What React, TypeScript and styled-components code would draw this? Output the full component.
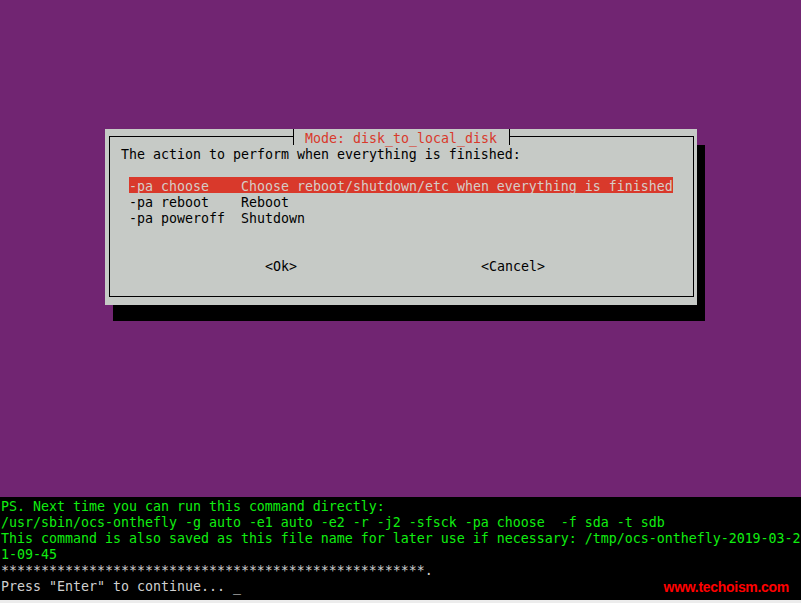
import { createGlobalStyle, styled } from "styled-components";

const GlobalStyle = createGlobalStyle`
    html, body {
        margin: 0;
        padding: 0;
        background: #000;
    }
    body {
        width: 801px;
        height: 603px;
        overflow: hidden;
    }
`;

// terminal grid: 8px columns, 16px rows; line-height a bit taller than the row
// so glyphs sit low in the cell like the console font does
const Screen = styled.div`
    width: 801px;
    height: 603px;
    display: flex;
    flex-direction: column;
    font-family: "DejaVu Sans Mono", monospace;
    font-size: 13.29px;
    line-height: 19px;
    white-space: pre;
`;

const Desktop = styled.div`
    height: 497px;
    box-sizing: border-box;
    padding: 129px 0 0 105px;
    background: #712572;
`;

const Dialog = styled.div`
    position: relative;
    width: 592px;
    height: 176px;
    box-sizing: border-box;
    padding: 7px 3px 8px 4px;
    display: flex;
    background: #c6cac6;
    box-shadow: 8px 16px 0 #000;
`;

const Frame = styled.div`
    flex: 1;
    border: 1px solid #000;
    padding: 8px 0 0 11px;
    display: flex;
    flex-direction: column;
    color: #000;
`;

const Title = styled.div`
    position: absolute;
    top: 0;
    left: 184px;
    height: 16px;
    display: flex;
    background: #c6cac6;
    color: #d9392b;
`;

const Tee = styled.span<{ $side: "left" | "right" }>`
    position: relative;
    width: 8px;
    height: 16px;
    &::before {
        content: "";
        position: absolute;
        left: 4px;
        top: 0;
        width: 1px;
        height: 16px;
        background: #000;
    }
    &::after {
        content: "";
        position: absolute;
        top: 7px;
        left: ${(p) => (p.$side === "left" ? "0" : "4px")};
        width: ${(p) => (p.$side === "left" ? "4px" : "5px")};
        height: 1px;
        background: #000;
    }
`;

const Prompt = styled.div`
    height: 16px;
`;

const Menu = styled.ul`
    list-style: none;
    margin: 16px 0 0 8px;
    padding: 0;
`;

const MenuItem = styled.li<{ $selected?: boolean }>`
    width: 544px;
    height: 16px;
    display: flex;
    background: ${(p) => (p.$selected ? "#d9392b" : "transparent")};
    color: ${(p) => (p.$selected ? "#d6cdc8" : "#000")};
`;

const Tag = styled.span`
    width: 112px;
`;

const Buttons = styled.div`
    height: 16px;
    margin: 32px 0 0 144px;
    display: flex;
    gap: 184px;
`;

const Console = styled.div`
    position: relative;
    height: 103px;
    box-sizing: border-box;
    padding-left: 1px;
    background: #000;
    color: #d0d0d0;
`;

const Line = styled.div<{ $green?: boolean }>`
    height: 16px;
    color: ${(p) => (p.$green ? "#10ee10" : "#d0d0d0")};
`;

const Watermark = styled.div`
    position: absolute;
    top: 82px;
    right: 12px;
    font-family: "Liberation Sans", Arial, sans-serif;
    font-weight: bold;
    font-size: 14px;
    line-height: 16px;
    letter-spacing: -0.3px;
    color: #ff0000;
`;

const Strip = styled.div`
    flex: 1;
    background: #ececec;
`;

const options = [
    { tag: "-pa choose", label: "Choose reboot/shutdown/etc when everything is finished" },
    { tag: "-pa reboot", label: "Reboot" },
    { tag: "-pa poweroff", label: "Shutdown" },
];

export default function App() {
    return (
        <Screen>
            <GlobalStyle />
            <Desktop>
                <Dialog>
                    <Frame>
                        <Prompt>The action to perform when everything is finished:</Prompt>
                        <Menu>
                            {options.map((o, i) => (
                                <MenuItem key={o.tag} $selected={i === 0}>
                                    <Tag>{o.tag}</Tag>
                                    <span>{o.label}</span>
                                </MenuItem>
                            ))}
                        </Menu>
                        <Buttons>
                            <span>&lt;Ok&gt;</span>
                            <span>&lt;Cancel&gt;</span>
                        </Buttons>
                    </Frame>
                    <Title>
                        <Tee $side="left" />
                        <span> Mode: disk_to_local_disk </span>
                        <Tee $side="right" />
                    </Title>
                </Dialog>
            </Desktop>
            <Console>
                <Line $green>PS. Next time you can run this command directly:</Line>
                <Line $green>/usr/sbin/ocs-onthefly -g auto -e1 auto -e2 -r -j2 -sfsck -pa choose  -f sda -t sdb</Line>
                <Line $green>This command is also saved as this file name for later use if necessary: /tmp/ocs-onthefly-2019-03-2</Line>
                <Line $green>1-09-45</Line>
                <Line>{"*".repeat(53)}.</Line>
                <Line>Press "Enter" to continue... _</Line>
                <Watermark>www.techoism.com</Watermark>
            </Console>
            <Strip />
        </Screen>
    );
}
